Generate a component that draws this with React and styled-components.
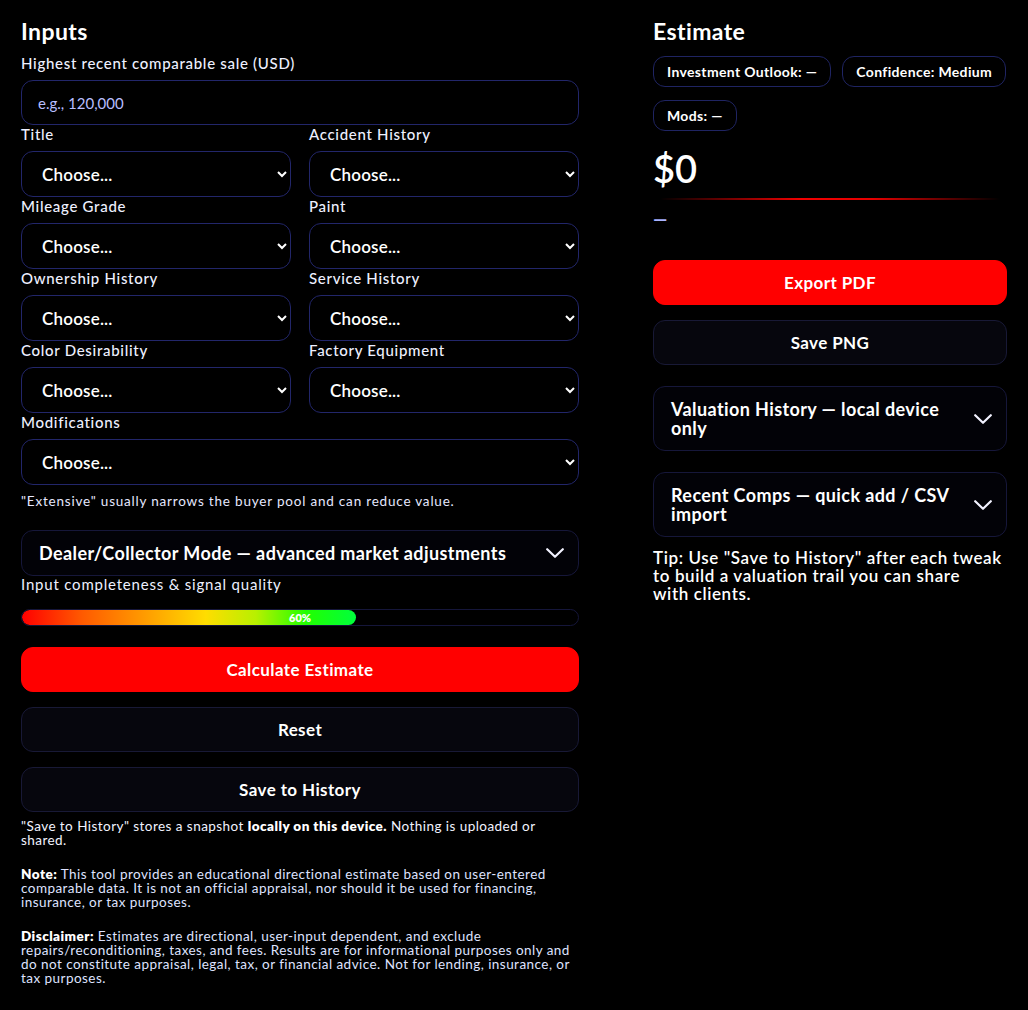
import React from "react";
import styled, { createGlobalStyle } from "styled-components";

const Global = createGlobalStyle`
  html, body { margin: 0; padding: 0; background: #000; }
  body { font-family: "Lato", "Noto Sans", sans-serif; color: #fff; }
  * { box-sizing: border-box; }
`;

const Page = styled.div`
  display: grid;
  grid-template-columns: 558px 354px;
  column-gap: 74px;
  padding: 19px 21px 20px 21px;
  min-height: 1010px;
  background: #000;
`;

const Column = styled.section`
  display: flex;
  flex-direction: column;
`;

const Heading = styled.h2`
  margin: 0 0 ${(p) => p.$mb || 11}px;
  font-size: 23px;
  line-height: 24px;
  font-weight: 700;
  letter-spacing: 0.4px;
  color: #fff;
`;

const Label = styled.label`
  display: block;
  font-size: 15px;
  line-height: 19px;
  font-weight: 500;
  color: #eef0ff;
  margin-bottom: 7px;
  letter-spacing: 0.7px;
`;

const TextInput = styled.input`
  width: 100%;
  height: 45px;
  border-radius: 12px;
  border: 1px solid #22266a;
  background: #000;
  color: #fff;
  padding: 0 16px;
  font-family: inherit;
  font-size: 15px;
  outline: none;
  &::placeholder { color: #b8beff; }
`;

const FieldGrid = styled.div`
  display: grid;
  grid-template-columns: 1fr 1fr;
  column-gap: 18px;
`;

const Field = styled.div`
  display: flex;
  flex-direction: column;
  grid-column: ${(p) => (p.$full ? "1 / -1" : "auto")};
`;

const Select = styled.select`
  width: 100%;
  height: 46px;
  border-radius: 12px;
  border: 1px solid #22266a;
  background: #000;
  color: #fff;
  padding: 0 10px 0 16px;
  font-family: inherit;
  font-size: 17px;
  font-weight: 600;
  letter-spacing: 0.2px;
  outline: none;
  color-scheme: dark;
`;

const Hint = styled.p`
  margin: 8px 0 21px;
  font-size: 13.5px;
  line-height: 16px;
  letter-spacing: 0.8px;
  color: #e6e8ff;
`;

const Accordion = styled.div`
  display: flex;
  align-items: center;
  justify-content: space-between;
  min-height: ${(p) => p.$h || 46}px;
  padding: 0 14px 0 17px;
  border-radius: 12px;
  border: 1px solid #16173a;
  background: #020207;
  margin-bottom: ${(p) => p.$mb || 0}px;
`;

const AccTitle = styled.span`
  font-size: 18px;
  line-height: 19px;
  font-weight: 700;
  letter-spacing: 0.4px;
  color: #fff;
  max-width: ${(p) => p.$max || "none"};
`;

const ChevronSvg = styled.svg`
  flex: none;
  width: 18px;
  height: 10px;
  color: #f2f2ff;
`;

const Chevron = () => (
  <ChevronSvg viewBox="0 0 18 10" fill="none">
    <path d="M1.2 1.2 L9 8.8 L16.8 1.2" stroke="currentColor" strokeWidth="2.2" strokeLinecap="round" strokeLinejoin="round" />
  </ChevronSvg>
);

const SmallLabel = styled.div`
  font-size: 15px;
  line-height: 17px;
  letter-spacing: 0.8px;
  color: #eef0ff;
  margin-bottom: 16px;
`;

const Track = styled.div`
  display: grid;
  height: 17px;
  border-radius: 9px;
  border: 1px solid #15163a;
  background: #000;
  overflow: hidden;
  margin-bottom: 21px;
`;

const Fill = styled.div`
  grid-area: 1 / 1;
  height: 100%;
  border-radius: 9px;
  background: linear-gradient(90deg, #ff0000 0%, #ff5a00 18%, #ffa000 38%, #ffdd00 55%, #b8f000 70%, #22ff00 85%, #00ff3c 100%);
`;

const TrackText = styled.span`
  grid-area: 1 / 1;
  align-self: center;
  justify-self: center;
  font-size: 11px;
  line-height: 12px;
  font-weight: 800;
  color: #fff;
`;

const Button = styled.button`
  width: 100%;
  height: 45px;
  border-radius: 12px;
  font-family: inherit;
  font-size: 17px;
  font-weight: 700;
  letter-spacing: 0.4px;
  color: #fff;
  cursor: pointer;
  background: ${(p) => (p.$primary ? "#ff0000" : "#06060d")};
  border: 1px solid ${(p) => (p.$primary ? "#ff0000" : "#181936")};
  margin-bottom: ${(p) => p.$mb || 0}px;
`;

const Small = styled.p`
  margin: ${(p) => p.$mt || 0}px 0 0;
  font-size: 13.5px;
  line-height: 14px;
  letter-spacing: 0.45px;
  color: ${(p) => p.$color || "#f2f3ff"};
  b { font-weight: 800; color: #fff; }
`;

const Pills = styled.div`
  display: flex;
  flex-wrap: wrap;
  gap: 13px 11px;
  margin-bottom: 14px;
`;

const Pill = styled.span`
  display: inline-flex;
  align-items: center;
  height: 31px;
  padding: 0 13px;
  border-radius: 12px;
  border: 1px solid #1f2462;
  font-size: 14px;
  font-weight: 700;
  letter-spacing: 0.35px;
  color: #fff;
  white-space: nowrap;
`;

const Amount = styled.div`
  font-size: 38px;
  line-height: 44px;
  font-weight: 600;
  color: #fff;
  margin-top: 1px;
`;

const Glow = styled.div`
  height: 2px;
  margin: 8px 0 10px;
  background: linear-gradient(90deg, rgba(255,0,0,0) 2%, rgba(255,0,0,0.95) 42%, rgba(255,0,0,0.9) 62%, rgba(255,0,0,0) 98%);
`;

const Dash = styled.div`
  font-size: 18px;
  line-height: 18px;
  font-weight: 700;
  color: #aab4ff;
  margin-bottom: 32px;
`;

const Tip = styled.p`
  margin: 12px 0 0;
  font-size: 17px;
  line-height: 18px;
  font-weight: 600;
  letter-spacing: 0.6px;
  color: #fff;
  text-wrap: pretty;
`;

const fields = [
  ["Title", "Accident History"],
  ["Mileage Grade", "Paint"],
  ["Ownership History", "Service History"],
  ["Color Desirability", "Factory Equipment"],
];

const Choose = () => (
  <Select defaultValue="">
    <option value="">Choose...</option>
  </Select>
);

export default function App() {
  return (
    <>
      <Global />
      <Page>
        <Column>
          <Heading>Inputs</Heading>
          <Label>Highest recent comparable sale (USD)</Label>
          <TextInput placeholder="e.g., 120,000" />
          <FieldGrid>
            {fields.flat().map((f) => (
              <Field key={f}>
                <Label>{f}</Label>
                <Choose />
              </Field>
            ))}
            <Field $full>
              <Label>Modifications</Label>
              <Choose />
            </Field>
          </FieldGrid>
          <Hint>"Extensive" usually narrows the buyer pool and can reduce value.</Hint>
          <Accordion>
            <AccTitle>Dealer/Collector Mode — advanced market adjustments</AccTitle>
            <Chevron />
          </Accordion>
          <SmallLabel>Input completeness &amp; signal quality</SmallLabel>
          <Track>
            <Fill style={{ width: "60%" }} />
            <TrackText>60%</TrackText>
          </Track>
          <Button $primary $mb={15}>Calculate Estimate</Button>
          <Button $mb={15}>Reset</Button>
          <Button>Save to History</Button>
          <Small $mt={7}>
            "Save to History" stores a snapshot <b>locally on this device.</b> Nothing is uploaded or shared.
          </Small>
          <Small $mt={20} $color="#dfe3ff">
            <b>Note:</b> This tool provides an educational directional estimate based on user-entered comparable data. It is not an official appraisal, nor should it be used for financing, insurance, or tax purposes.
          </Small>
          <Small $mt={20} $color="#dfe3ff">
            <b>Disclaimer:</b> Estimates are directional, user-input dependent, and exclude repairs/reconditioning, taxes, and fees. Results are for informational purposes only and do not constitute appraisal, legal, tax, or financial advice. Not for lending, insurance, or tax purposes.
          </Small>
        </Column>
        <Column>
          <Heading $mb={13}>Estimate</Heading>
          <Pills>
            <Pill>Investment Outlook: —</Pill>
            <Pill>Confidence: Medium</Pill>
            <Pill>Mods: —</Pill>
          </Pills>
          <Amount>$0</Amount>
          <Glow />
          <Dash>—</Dash>
          <Button $primary $mb={15}>Export PDF</Button>
          <Button $mb={21}>Save PNG</Button>
          <Accordion $h={65} $mb={21}>
            <AccTitle $max="290px">Valuation History — local device only</AccTitle>
            <Chevron />
          </Accordion>
          <Accordion $h={65}>
            <AccTitle $max="290px">Recent Comps — quick add / CSV import</AccTitle>
            <Chevron />
          </Accordion>
          <Tip>Tip: Use "Save to History" after each tweak to build a valuation trail you can share with clients.</Tip>
        </Column>
      </Page>
    </>
  );
}
